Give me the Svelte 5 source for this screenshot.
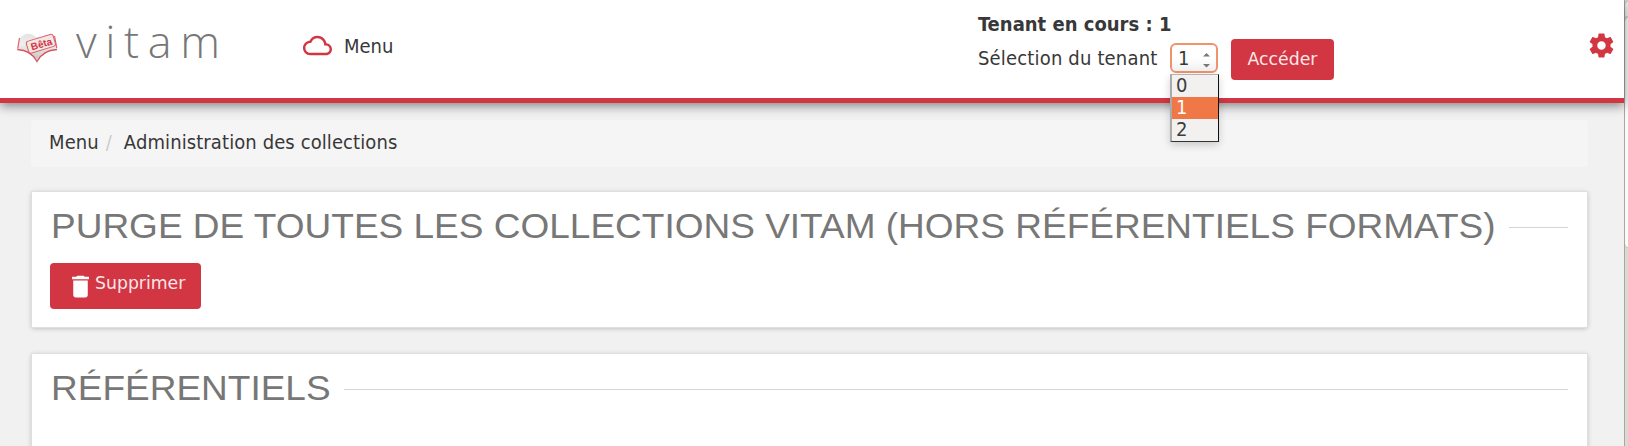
<script>
  const tenants = ['0', '1', '2'];
  let current = $state('1');
</script>

<div class="page">
  <header>
    <a class="logo" href="#home" aria-label="vitam">
      <svg class="book" viewBox="0 0 42 32" width="42" height="32">
        <defs>
          <linearGradient id="leaf" x1="0" y1="0" x2="0" y2="1">
            <stop offset="0" stop-color="#e2e2e2" />
            <stop offset="0.4" stop-color="#efefef" />
            <stop offset="1" stop-color="#c4c4c4" />
          </linearGradient>
        </defs>
        <path d="M1.5 17 4 6Q12-2 20 5Q30 6 38 3L41 17Q27 17 21 28Q14 17 1.5 17Z" fill="url(#leaf)" />
        <path d="M3.5 6 1.7 16.5M38.5 4 40.8 16" fill="none" stroke="#dd6067" stroke-width="1.2" />
        <path d="M1.3 17.5Q15 18 21 29.5Q27 18 41 17.5" fill="none" stroke="#d9525b" stroke-width="1.3" />
        <g transform="rotate(-17 25 12)">
          <rect x="11" y="5.5" width="28" height="12.5" rx="2.5" fill="#f3e6e6" stroke="#dc5e66" stroke-width="1" />
          <text x="14.5" y="15.7" class="beta">Bêta</text>
        </g>
      </svg>
      <span>vitam</span>
    </a>
    <a class="menu" href="#menu">
      <svg viewBox="0 0 24 24" width="29" height="29"><path fill="#d13642" d="M19.35 10.04C18.67 6.59 15.64 4 12 4 9.11 4 6.6 5.64 5.35 8.04 2.34 8.36 0 10.91 0 14c0 3.31 2.69 6 6 6h13c2.76 0 5-2.24 5-5 0-2.64-2.05-4.78-4.65-4.96zM19 18H6c-2.21 0-4-1.79-4-4s1.79-4 4-4h.71C7.37 7.69 9.48 6 12 6c3.04 0 5.5 2.46 5.5 5.5v.5H19c1.66 0 3 1.34 3 3s-1.34 3-3 3z" /></svg>
      <span>Menu</span>
    </a>
    <div class="tenant">
      <strong>Tenant en cours : {current}</strong>
      <div class="choose">
        <span class="label">Sélection du tenant</span>
        <div class="select">
          <span>{current}</span>
          <svg viewBox="0 0 7 17" width="7" height="17"><path d="M0 4.5 3.5 1 7 4.5ZM0 12 3.5 15.5 7 12Z" fill="#777" /></svg>
          <div class="options">
            {#each tenants as t}
              <button class="option" class:on={t === current} onclick={() => (current = t)}>{t}</button>
            {/each}
          </div>
        </div>
        <button class="btn go">Accéder</button>
      </div>
    </div>
    <svg class="gear" viewBox="0 0 24 24" width="29" height="29"><path fill="#d13642" d="M19.43 12.98c.04-.32.07-.64.07-.98s-.03-.66-.07-.98l2.11-1.65c.19-.15.24-.42.12-.64l-2-3.46c-.12-.22-.39-.3-.61-.22l-2.49 1c-.52-.4-1.08-.73-1.69-.98l-.38-2.65C14.46 2.18 14.25 2 14 2h-4c-.25 0-.46.18-.49.42l-.38 2.65c-.61.25-1.17.59-1.69.98l-2.49-1c-.23-.09-.49 0-.61.22l-2 3.46c-.13.22-.07.49.12.64l2.11 1.65c-.04.32-.07.65-.07.98s.03.66.07.98l-2.11 1.65c-.19.15-.24.42-.12.64l2 3.46c.12.22.39.3.61.22l2.49-1c.52.4 1.08.73 1.69.98l.38 2.65c.03.24.24.42.49.42h4c.25 0 .46-.18.49-.42l.38-2.65c.61-.25 1.17-.59 1.69-.98l2.49 1c.23.09.49 0 .61-.22l2-3.46c.12-.22.07-.49-.12-.64l-2.11-1.65zM12 15.5c-1.93 0-3.5-1.57-3.5-3.5s1.57-3.5 3.5-3.5 3.5 1.57 3.5 3.5-1.57 3.5-3.5 3.5z" /></svg>
  </header>

  <main>
    <nav><a href="#menu">Menu</a><i>/</i><span>Administration des collections</span></nav>
    <section class="first">
      <h2><span class="title">PURGE DE TOUTES LES COLLECTIONS VITAM (HORS RÉFÉRENTIELS FORMATS)</span></h2>
      <button class="btn delete">
        <svg viewBox="0 0 24 24" width="29" height="29"><path fill="#fff" d="M6 19c0 1.1.9 2 2 2h8c1.1 0 2-.9 2-2V7H6v12zM19 4h-3.5l-1-1h-5l-1 1H5v2h14V4z" /></svg>
        <span>Supprimer</span>
      </button>
    </section>
    <section class="second">
      <h2><span class="title">RÉFÉRENTIELS</span></h2>
    </section>
  </main>
  <div class="scrollbar"><div class="stepper"></div><div class="thumb"></div></div>
</div>

<style>
  :global(body) { overflow: hidden; }
  .page {
    position: relative;
    width: 1628px;
    height: 446px;
    overflow: hidden;
    background: #f1f1f1;
    color: #383838;
    font-family: 'DejaVu Sans Condensed', 'DejaVu Sans', sans-serif;
    font-stretch: condensed;
    font-size: 20px;
    line-height: 24px;
  }
  .page * { box-sizing: border-box; }
  a { color: inherit; text-decoration: none; }
  button { font: inherit; border: 0; padding: 0; margin: 0; }
  svg { display: block; flex: none; }
  header {
    position: relative;
    z-index: 1;
    display: flex;
    width: 1624px;
    height: 103px;
    background: #fff;
    border-bottom: 5px solid #d13642;
    box-shadow: 0 3px 10px rgba(0, 0, 0, 0.45);
  }
  .logo { display: flex; width: 302px; padding-left: 16px; }
  .book { margin-top: 32px; }
  .beta { font: bold 10px 'Liberation Sans', sans-serif; fill: #d13642; }
  .logo span {
    margin: 11px 0 0 18px;
    font: 300 45px/60px 'Open Sans', sans-serif;
    letter-spacing: 8.6px;
    color: #777;
  }
  .menu { display: flex; gap: 12px; width: 676px; padding: 31px 0 0 1px; }
  .menu span { margin-top: 3px; }
  .tenant { width: 609px; padding-top: 12px; }
  .tenant strong { display: block; height: 27px; }
  .choose { display: flex; }
  .label { width: 192px; padding-top: 7px; letter-spacing: 0.17px; }
  .select {
    position: relative;
    display: flex;
    align-items: center;
    justify-content: space-between;
    width: 48px;
    height: 30px;
    margin-top: 4px;
    padding: 0 6px 1px 6px;
    border: 2px solid #f0936c;
    border-radius: 6px;
    background: linear-gradient(#fff 50%, #f0f0f0);
  }
  .select svg { margin-top: 5px; }
  .options {
    position: absolute;
    top: 29px;
    left: -2px;
    width: 49px;
    height: 68px;
    border: 2px solid #aaa;
    border-top: 1px solid #b9b0b0;
    border-right: 1px solid #111;
    border-bottom: 1px solid #333;
    background: #f2f1f0;
    box-shadow: 0 3px 8px rgba(0, 0, 0, 0.18);
  }
  .option {
    display: block;
    width: 100%;
    height: 22px;
    padding: 0 0 2px 4px;
    background: none;
    color: #3c3c3c;
    line-height: 20px;
    text-align: left;
  }
  .option.on { background: #f07746; color: #fff; }
  .btn {
    background: #d13642;
    border-radius: 4px;
    color: #fbe6e8;
    font-family: 'DejaVu Sans', sans-serif;
    font-stretch: normal;
    font-size: 17.3px;
  }
  .go { width: 103px; height: 41px; margin-left: 13px; padding-bottom: 2px; }
  .gear { margin-top: 31px; }
  main { padding: 17px 0 0 31px; }
  nav {
    display: flex;
    width: 1557px;
    height: 47px;
    padding: 10px 0 0 18px;
    border-radius: 4px;
    background: #f5f5f5;
    letter-spacing: 0.1px;
  }
  nav i { width: 25px; padding-left: 7px; color: #ccc; font-style: normal; }
  section {
    width: 1555px;
    margin-left: 1px;
    background: #fff;
    box-shadow: 0 0 0 1px #dfdfdf, 0 1px 5px rgba(0, 0, 0, 0.28);
  }
  .first { height: 135px; margin-top: 25px; padding: 17px 19px 0 18px; }
  .second { height: 130px; margin-top: 27px; padding: 17px 19px 0 18px; }
  h2 {
    display: flex;
    align-items: center;
    height: 36px;
    margin: 0;
    color: #777;
    font: 400 37px/36px 'Liberation Sans', Arial, sans-serif;
    white-space: nowrap;
  }
  .title { padding: 0 1px 2px 1px; transform: scaleY(0.95); transform-origin: 0 31px; }
  h2::after { content: ''; flex: 1; height: 1px; margin-left: 12px; background: #d4d4d4; }
  .delete { display: flex; width: 151px; height: 46px; margin-top: 18px; padding: 9px 0 0 16px; }
  .delete span { margin: -1px 0 0; }
  .scrollbar {
    position: absolute;
    top: 0;
    right: 0;
    width: 4px;
    height: 446px;
    border-left: 1px solid #aaa6a2;
    background: #dcd8d2;
  }
  .stepper {
    width: 14px;
    height: 16px;
    border-top: 1px solid #aaa6a2;
    border-radius: 5px 0 0 0;
    background: #f3f2f0;
  }
  .thumb {
    width: 14px;
    height: 233px;
    border: 1px solid #aaa6a2;
    border-left: 0;
    border-radius: 5px;
    background: #fafafa;
  }
</style>
